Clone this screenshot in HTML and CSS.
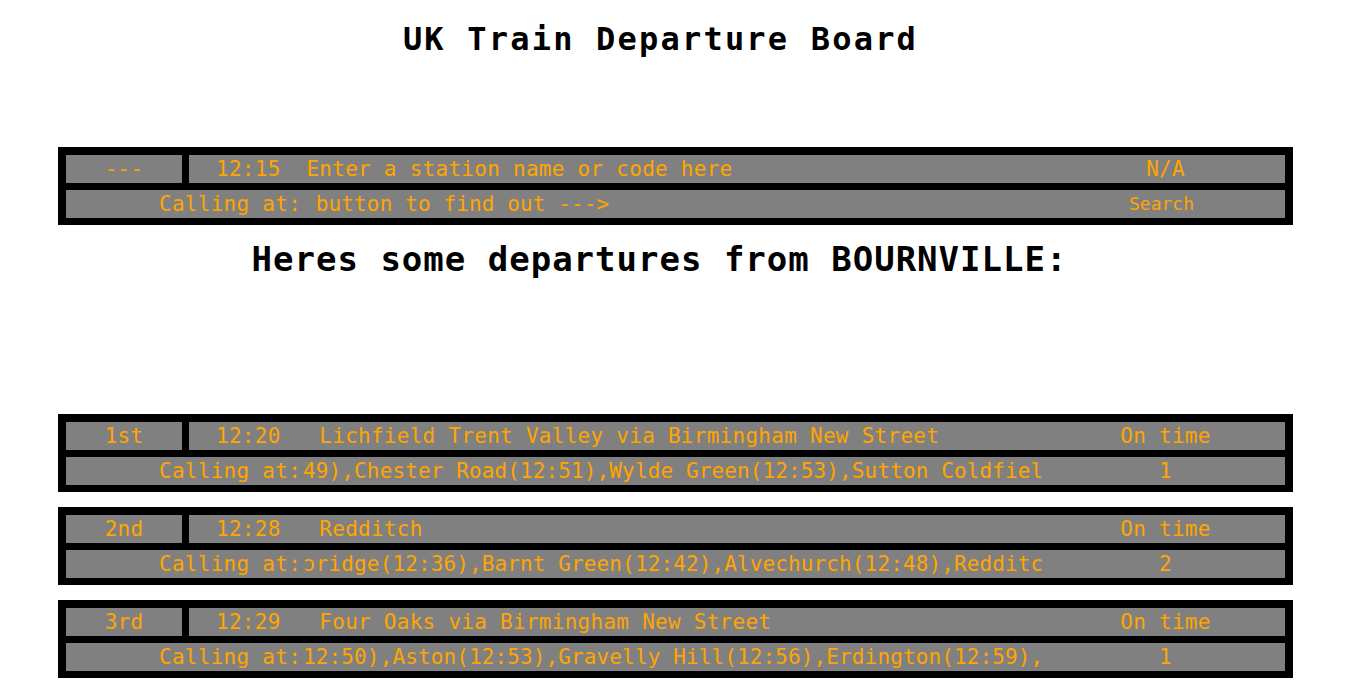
FILE: index.html
```html
<!DOCTYPE html>
<html>
<head>
<meta charset="utf-8">
<title>UK Train Departure Board</title>
<link rel="stylesheet" href="styles.css">
</head>
<body>
<h1 class="title">UK Train Departure Board</h1>

<div class="board board-search">
  <div class="row row-top">
    <div class="cell cell-pos">---</div>
    <div class="cell cell-main">
      <span class="dest">12:15  Enter a station name or code here</span>
      <span class="status">N/A</span>
    </div>
  </div>
  <div class="row cell row-bottom">
    <span class="label">Calling at:</span>
    <span class="window"><span class="scroll"> button to find out ---></span></span>
    <span class="status status-btn">Search</span>
  </div>
</div>

<h2 class="subtitle">Heres some departures from BOURNVILLE:</h2>

<div class="board board-first">
  <div class="row row-top">
    <div class="cell cell-pos">1st</div>
    <div class="cell cell-main">
      <span class="dest">12:20   Lichfield Trent Valley via Birmingham New Street</span>
      <span class="status">On time</span>
    </div>
  </div>
  <div class="row cell row-bottom">
    <span class="label">Calling at:</span>
    <span class="window"><span class="scroll">49),Chester Road(12:51),Wylde Green(12:53),Sutton Coldfiel</span></span>
    <span class="status">1</span>
  </div>
</div>

<div class="board">
  <div class="row row-top">
    <div class="cell cell-pos">2nd</div>
    <div class="cell cell-main">
      <span class="dest">12:28   Redditch</span>
      <span class="status">On time</span>
    </div>
  </div>
  <div class="row cell row-bottom">
    <span class="label">Calling at:</span>
    <span class="window"><span class="scroll">ɔridge(12:36),Barnt Green(12:42),Alvechurch(12:48),Redditc</span></span>
    <span class="status">2</span>
  </div>
</div>

<div class="board">
  <div class="row row-top">
    <div class="cell cell-pos">3rd</div>
    <div class="cell cell-main">
      <span class="dest">12:29   Four Oaks via Birmingham New Street</span>
      <span class="status">On time</span>
    </div>
  </div>
  <div class="row cell row-bottom">
    <span class="label">Calling at:</span>
    <span class="window"><span class="scroll">12:50),Aston(12:53),Gravelly Hill(12:56),Erdington(12:59),</span></span>
    <span class="status">1</span>
  </div>
</div>
</body>
</html>
```
FILE: styles.css
```css
html, body {
  margin: 0;
  padding: 0;
  background: #ffffff;
}

body {
  font-family: "DejaVu Sans Mono", "Liberation Mono", monospace;
  color: #000;
}

.title {
  margin: 19px 0 0 0;
  padding-right: 26px;
  font-size: 32px;
  line-height: 40px;
  letter-spacing: 2.2px;
  font-weight: bold;
  text-align: center;
}

.subtitle {
  margin: 14px 0 135px 0;
  padding-right: 28px;
  font-size: 34px;
  line-height: 40px;
  letter-spacing: 1px;
  font-weight: bold;
  text-align: center;
}

.board {
  width: 1235px;
  box-sizing: border-box;
  margin: 0 0 15px 58px;
  padding: 8px 8px 7px 8px;
  background: #000;
  display: flex;
  flex-direction: column;
  gap: 7px;
  color: #ffa500;
  font-size: 21px;
  letter-spacing: 0.27px;
}

.board-search {
  margin-top: 88px;
  margin-bottom: 0;
}

.row {
  height: 28px;
  line-height: 28px;
  white-space: pre;
}

.row-top {
  display: flex;
  gap: 7px;
}

.cell {
  background: #808080;
  height: 28px;
  line-height: 28px;
}

.cell-pos {
  width: 116px;
  text-align: center;
  flex: none;
}

.cell-main {
  flex: 1;
  display: flex;
  padding-left: 27px;
}

.dest {
  flex: 1;
  overflow: hidden;
}

.status {
  width: 239px;
  flex: none;
  text-align: center;
}

.row-bottom {
  display: flex;
  padding-left: 93px;
}

.label {
  flex: none;
}

.window {
  flex: 1;
  overflow: hidden;
  display: block;
  padding-left: 2px;
}

.scroll {
  display: inline-block;
  letter-spacing: 0.12px;
}

.status-btn {
  font-size: 18px;
  letter-spacing: 0;
  padding-right: 8px;
  box-sizing: border-box;
}
```
